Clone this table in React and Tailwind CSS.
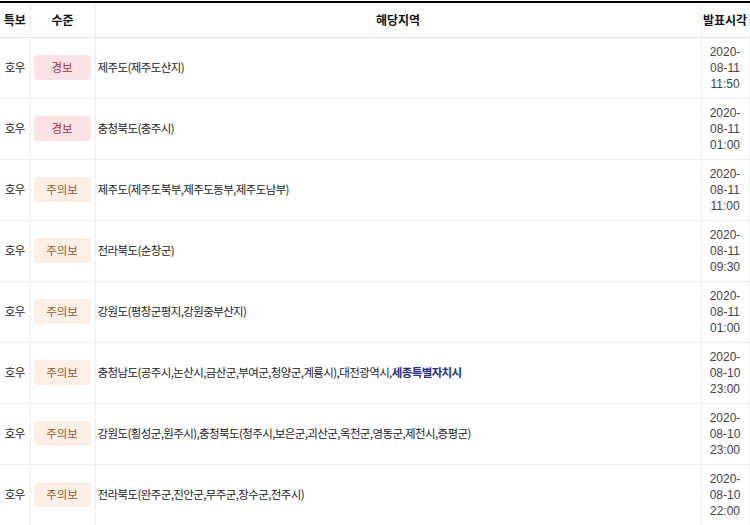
import React from 'react';

const ROWS = [
  { kind: '호우', level: '경보', area: '제주도(제주도산지)', time: ['2020-', '08-11', '11:50'] },
  { kind: '호우', level: '경보', area: '충청북도(충주시)', time: ['2020-', '08-11', '01:00'] },
  { kind: '호우', level: '주의보', area: '제주도(제주도북부,제주도동부,제주도남부)', time: ['2020-', '08-11', '11:00'] },
  { kind: '호우', level: '주의보', area: '전라북도(순창군)', time: ['2020-', '08-11', '09:30'] },
  { kind: '호우', level: '주의보', area: '강원도(평창군평지,강원중부산지)', time: ['2020-', '08-11', '01:00'] },
  {
    kind: '호우', level: '주의보',
    area: '충청남도(공주시,논산시,금산군,부여군,청양군,계룡시),대전광역시,',
    strong: '세종특별자치시',
    time: ['2020-', '08-10', '23:00'],
  },
  { kind: '호우', level: '주의보', area: '강원도(횡성군,원주시),충청북도(청주시,보은군,괴산군,옥천군,영동군,제천시,증평군)', time: ['2020-', '08-10', '23:00'] },
  { kind: '호우', level: '주의보', area: '전라북도(완주군,진안군,무주군,장수군,전주시)', time: ['2020-', '08-10', '22:00'] },
];

const BADGE = {
  경보: 'bg-[#fce4e6] text-[#a8323e]',
  주의보: 'bg-[#fcefe5] text-[#9c5a22]',
};

const App = () => {
  return (
    <div
      className="w-[750px] h-[525px] overflow-hidden bg-white pt-px"
      style={{ fontFamily: '"Noto Sans CJK KR", "Noto Sans", sans-serif' }}
    >
      <table className="table-fixed border-collapse w-[749px] text-[11.5px] tracking-[-0.6px] text-[#222]">
        <colgroup>
          <col className="w-[30px]" />
          <col className="w-[65px]" />
          <col className="w-[606px]" />
          <col className="w-[48px]" />
        </colgroup>
        <thead>
          <tr className="h-[35px] border-t-2 border-black border-b border-b-[#e2e2e2] text-[12px] tracking-normal">
            <th className="font-bold text-[#111] border-r border-[#eeeeee] text-center">특보</th>
            <th className="font-bold text-[#111] border-r border-[#eeeeee] text-center">수준</th>
            <th className="font-bold text-[#111] border-r border-[#eeeeee] text-center">해당지역</th>
            <th className="font-bold text-[#111] border-r border-[#eeeeee] text-center">발표시각</th>
          </tr>
        </thead>
        <tbody>
          {ROWS.map((r, i) => (
            <tr key={i} className="h-[61px] border-b border-[#eeeeee]">
              <td className="border-r border-[#eeeeee] text-center">{r.kind}</td>
              <td className="border-r border-[#eeeeee] px-[3px]">
                <div className={`h-[25px] w-[57px] rounded flex items-center justify-center tracking-normal ${BADGE[r.level]}`}>
                  {r.level}
                </div>
              </td>
              <td className="border-r border-[#eeeeee] pl-[2px]">
                {r.area}
                {r.strong && <b className="font-bold text-[#28327f]">{r.strong}</b>}
              </td>
              <td
                className="border-r border-[#eeeeee] text-center text-[#444] text-[12px] tracking-normal leading-[16px]"
                style={{ fontFamily: '"Liberation Sans", Arial, sans-serif' }}
              >
                {r.time.map(t => (
                  <div key={t}>{t}</div>
                ))}
              </td>
            </tr>
          ))}
        </tbody>
      </table>
    </div>
  );
};

export default App;
